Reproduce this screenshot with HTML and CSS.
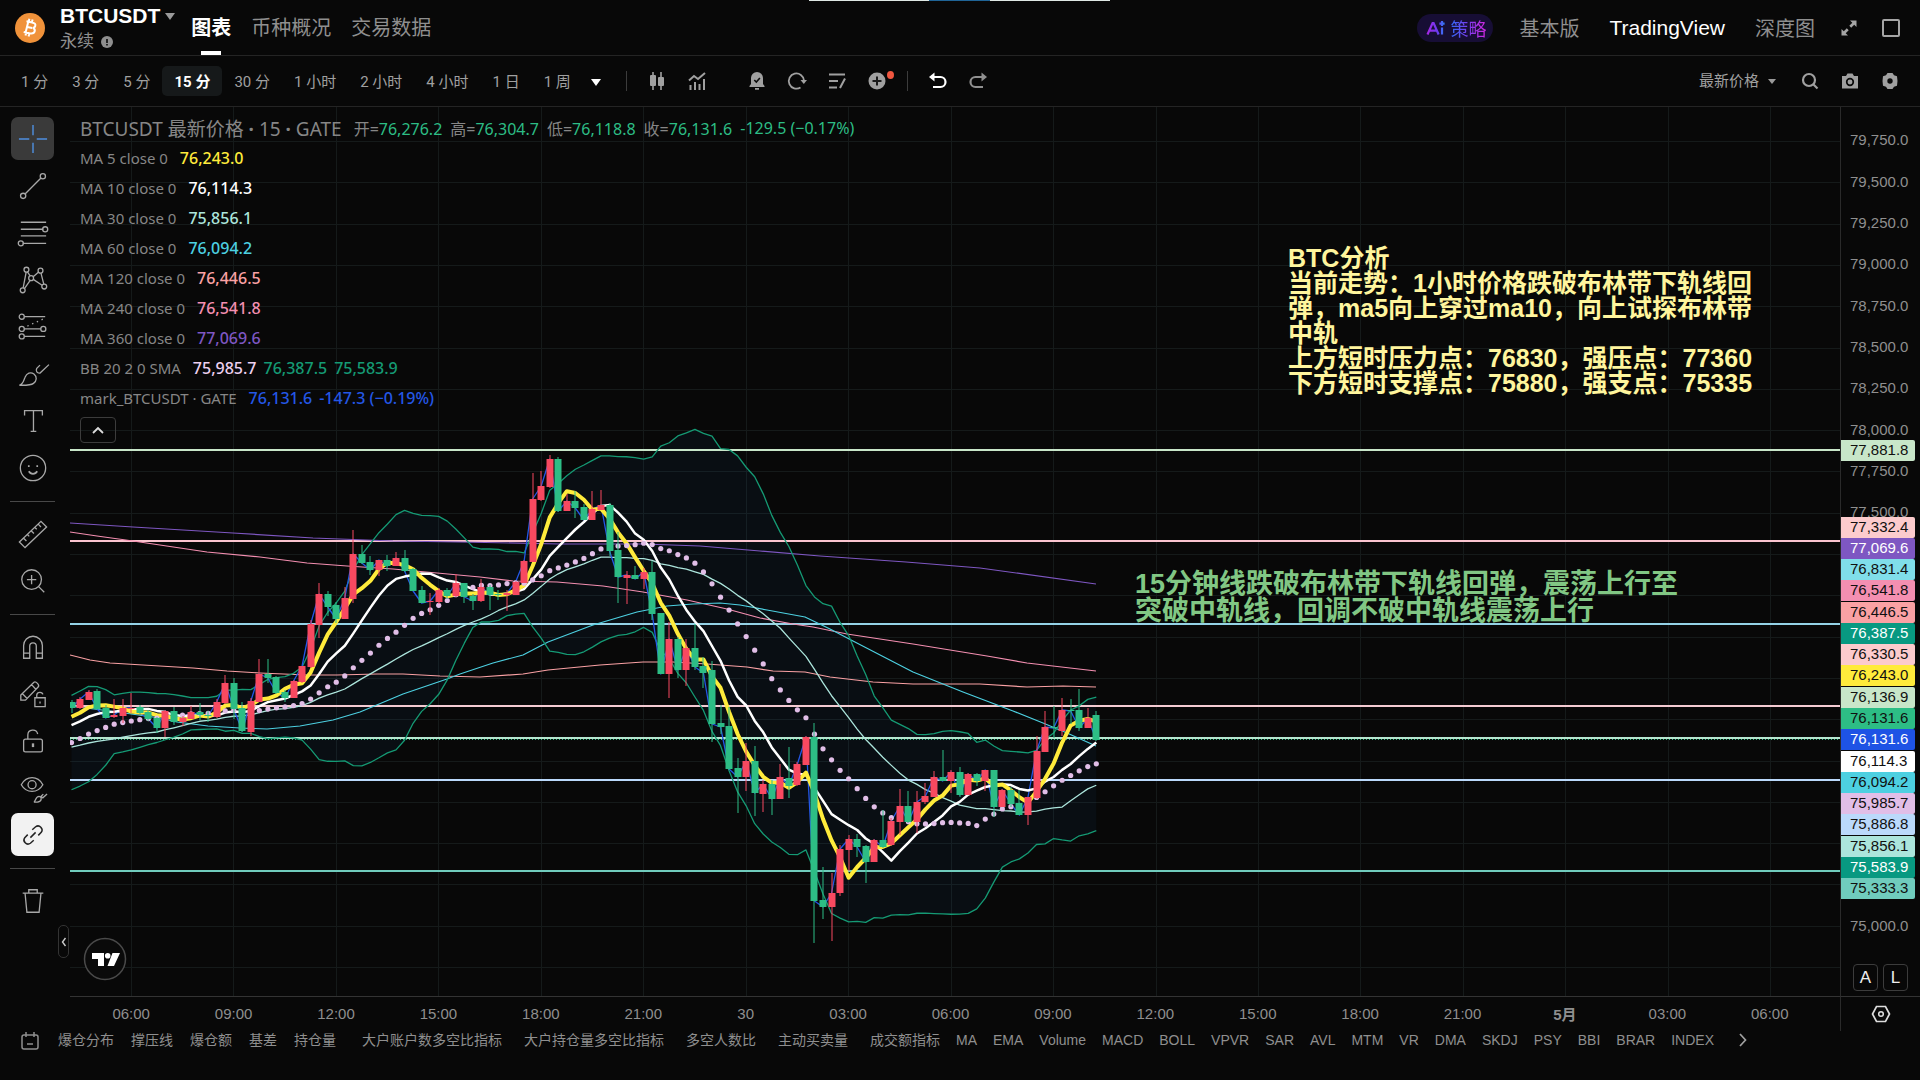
FILE: index.html
```html
<!DOCTYPE html>
<html lang="zh-CN">
<head>
    <meta charset="UTF-8">
    <meta name="viewport" content="width=device-width, initial-scale=1.0">
    <title>BTCUSDT 永续</title>
    <link rel="stylesheet" href="styles.css">
</head>
<body>
    <div class="top-strip"></div>

    <header class="header">
        <svg class="coin" viewBox="0 0 30 30">
            <circle cx="15" cy="15" r="15" fill="#f0923a"/>
            <path d="M11.5 8.2l5.6 1.2c2.6.6 3.6 1.7 3.2 3.4-.3 1.3-1.2 2-2.4 2 1.6.7 2.2 1.8 1.8 3.4-.5 2-2.2 2.6-5.2 2l-5.8-1.3M13.2 9l-2.6 10.4M12.2 13.9l5 1.1M14.4 5.8l-.7 2.7M17.6 6.5l-.7 2.7M11.2 19.8l-.7 2.8M14.3 20.6l-.7 2.8" fill="none" stroke="#fff" stroke-width="2"/>
        </svg>
        <div class="symbol">
            <button class="symbol-name">BTCUSDT<i class="caret"></i></button>
            <div class="symbol-type">永续
                <svg width="12" height="12" viewBox="0 0 12 12"><circle cx="6" cy="6" r="6" fill="#8f8f8f"/><path d="M6 3v4M6 8v1.4" stroke="#0a0a0a" stroke-width="1.6"/></svg>
            </div>
        </div>
        <nav class="tabs">
            <a href="#" class="active">图表</a>
            <a href="#">币种概况</a>
            <a href="#">交易数据</a>
        </nav>
        <nav class="views">
            <a href="#" class="ai">
                <svg width="20" height="16" viewBox="0 0 20 16">
                    <defs><linearGradient id="ai-fill" x1="0" x2="1"><stop offset="0" stop-color="#a428e6"/><stop offset=".6" stop-color="#6a3cf0"/><stop offset="1" stop-color="#2f7cf6"/></linearGradient></defs>
                    <path d="M1.5 14.5L6.6 3h1l5 11.5M3.4 10.6h7.4M16 7.5v7M16 1v5M13.4 3.6h5.2" fill="none" stroke="url(#ai-fill)" stroke-width="2.2"/>
                </svg>
                <span>策略</span>
            </a>
            <a href="#">基本版</a>
            <a href="#" class="active">TradingView</a>
            <a href="#">深度图</a>
            <button class="expand" aria-label="展开"><svg width="18" height="18" viewBox="0 0 18 18"><path d="M10 1.5h6.5V8l-2.3-2.3-3 3-1.9-1.9 3-3zM8 16.5H1.5V10l2.3 2.3 3-3 1.9 1.9-3 3z" fill="#a5a5a5"/></svg></button>
            <button class="window" aria-label="窗口"><svg width="18" height="18" viewBox="0 0 18 18"><rect x="1" y="1" width="16" height="16" rx="1" fill="none" stroke="#a5a5a5" stroke-width="2"/></svg></button>
        </nav>
    </header>

    <div class="toolbar">
        <div class="intervals">
            <button>1 分</button>
            <button>3 分</button>
            <button>5 分</button>
            <button class="active">15 分</button>
            <button>30 分</button>
            <button>1 小时</button>
            <button>2 小时</button>
            <button>4 小时</button>
            <button>1 日</button>
            <button>1 周</button>
            <button class="more" aria-label="更多周期"><i class="caret white"></i></button>
        </div>
        <div class="actions">
            <button aria-label="K线样式"><svg viewBox="0 0 20 20"><path d="M6 1v18M14 1v18" stroke="#a0a0a0" stroke-width="1.6"/><rect x="3" y="4" width="6" height="11" rx="1" fill="#a0a0a0"/><rect x="11" y="6" width="6" height="9" rx="1" fill="#a0a0a0"/></svg></button>
            <button aria-label="指标"><svg viewBox="0 0 20 20"><path d="M2 9.5l5-4.5 4 3 7-6M3.5 19v-5M8 19v-8M12.500 19v-6M17 19V8" fill="none" stroke="#a0a0a0" stroke-width="2"/></svg></button>
            <button aria-label="提醒" class="wide"><svg viewBox="0 0 20 20"><path d="M10 1a6 6 0 0 1 6 6v6l1.500 2v1h-15v-1L4 13V7a6 6 0 0 1 6-6zM8 17h4v1.800H8z" fill="#a0a0a0"/><path d="M7.300 9l2 2 3.600-4" fill="none" stroke="#0a0a0a" stroke-width="1.600"/></svg></button>
            <button aria-label="回放"><svg viewBox="0 0 20 20"><path d="M13.500 16.500A7.600 7.600 0 1 1 17 9.500" fill="none" stroke="#a0a0a0" stroke-width="1.800"/><path d="M13.500 9H20l-3.200 4z" fill="#a0a0a0"/></svg></button>
            <button aria-label="列表"><svg viewBox="0 0 20 20"><path d="M2 3.500h16M2 10h9M2 16.500h8M18 7.500l-5 9.500" fill="none" stroke="#a0a0a0" stroke-width="2"/></svg></button>
            <button aria-label="添加" class="dot"><svg viewBox="0 0 20 20"><circle cx="10" cy="10" r="8.500" fill="#a0a0a0"/><path d="M10 5.500v9M5.500 10h9" stroke="#1a1a1a" stroke-width="2"/></svg></button>
        </div>
        <div class="history">
            <button aria-label="撤销"><svg viewBox="0 0 20 20"><path d="M4 6h8.500a5 5 0 0 1 0 10H5" fill="none" stroke="#fff" stroke-width="2.200"/><path d="M6.500 1.500v9L1 6z" fill="#fff"/></svg></button>
            <button aria-label="重做"><svg viewBox="0 0 20 20"><path d="M16 6H7.500a5 5 0 0 0 0 10H15" fill="none" stroke="#909090" stroke-width="2.200"/><path d="M13.500 1.500v9L19 6z" fill="#909090"/></svg></button>
        </div>
        <div class="right-tools">
            <label class="price-type">
                <select aria-label="价格类型"><option>最新价格</option></select>
                <i class="caret small"></i>
            </label>
            <button aria-label="搜索"><svg viewBox="0 0 20 20"><circle cx="9" cy="9" r="6" fill="none" stroke="#a0a0a0" stroke-width="2.200"/><path d="M13.500 13.500l4 4" stroke="#a0a0a0" stroke-width="2.200"/></svg></button>
            <button aria-label="截图"><svg viewBox="0 0 20 20"><path d="M2 5h4l1.500-2.500h5L14 5h4v12.500H2z" fill="#a0a0a0"/><circle cx="10" cy="11" r="3.300" fill="none" stroke="#0a0a0a" stroke-width="1.700"/></svg></button>
            <button aria-label="设置"><svg viewBox="0 0 20 20"><path d="M7.500 2h5l1.500 2.200 3 1L17.500 10 17 14.800l-3 1L12.500 18h-5L6 15.800l-3-1L2.500 10 3 5.200l3-1z" fill="#a0a0a0"/><circle cx="10" cy="10" r="2.700" fill="#0a0a0a"/></svg></button>
        </div>
    </div>

    <main class="workspace">
        <aside class="rail">
            <div class="tools">
                <button class="selected" aria-label="十字线"><svg viewBox="0 0 32 32"><path d="M16 1v11M16 20v11M1 16h11M20 16h11" stroke-width="1.500"/></svg></button>
                <button aria-label="趋势线"><svg viewBox="0 0 32 32"><circle cx="5.500" cy="26.500" r="2.800"/><circle cx="26.500" cy="5.500" r="2.800"/><path d="M7.500 24.500l17-17"/></svg></button>
                <button aria-label="斐波那契"><svg viewBox="0 0 32 32"><path d="M3 4.500h27M3 12h24M3 19h27M5 27h25"/><circle cx="29" cy="12" r="2.700"/><circle cx="3" cy="27" r="2.700"/></svg></button>
                <button aria-label="形态"><svg viewBox="0 0 32 32"><circle cx="9" cy="5" r="2.600"/><circle cx="24" cy="6" r="2.600"/><circle cx="14" cy="14" r="2.600"/><circle cx="5" cy="27" r="2.600"/><circle cx="28" cy="23" r="2.600"/><path d="M8.700 7.600L5.500 24.400M7 25l6-8.600M10 7.400l3 4.300M16.200 12.500l5.800-5M16.300 15.300l9.400 6.300M24.500 8.600l3 11.800"/></svg></button>
                <button aria-label="预测"><svg viewBox="0 0 32 32"><circle cx="4" cy="5" r="2.700"/><circle cx="4" cy="18" r="2.700"/><circle cx="27" cy="18" r="2.700"/><circle cx="4" cy="26" r="2.700"/><path d="M6.700 5H29M6.700 18h17.600M6.700 26H29"/><path d="M10 15L28 7" stroke-dasharray="1.500 4"/></svg></button>
                <button aria-label="画笔"><svg viewBox="0 0 32 32"><path d="M1.500 28c4-1 4-4 6-8.500 1.800-4.500 6-6 9.500-3.500 3.500 2.800 3.200 7.200-.5 10-3 2.300-8 2-15 2zM33 6l-9.500 9c-3 .5-5-2-3.500-5l3.500-3.500"/></svg></button>
                <button aria-label="文字"><svg viewBox="0 0 32 32"><path d="M7 10V5h19v5M16.500 5v22M13.500 27h6"/></svg></button>
                <button aria-label="表情"><svg viewBox="0 0 32 32"><circle cx="16" cy="16" r="13.500"/><path d="M11.500 19.500c2 3.600 7 3.600 9 0M11.500 13v2M20.500 13v2" stroke-width="1.800"/></svg></button>
            </div>
            <hr>
            <div class="tools">
                <button aria-label="测量"><svg viewBox="0 0 32 32"><path d="M1.500 24.500L24.500 2.500l6 6-23 22zM6 20.500l3 3M10 16.500l2 2M14 12.500l3 3M18 9l2 2M21.500 5.500l3 3"/></svg></button>
                <button aria-label="放大"><svg viewBox="0 0 32 32"><circle cx="14.500" cy="14.500" r="10.500"/><path d="M14.500 9.500v10M9.500 14.500h10M22 22l6 6"/></svg></button>
            </div>
            <hr>
            <div class="tools">
                <button aria-label="磁铁"><svg viewBox="0 0 32 32"><path d="M6 28V14.500a10 10 0 0 1 20 0V28h-6.500V15a3.500 3.500 0 0 0-7 0v13zM6 22.500h6.500M19.500 22.500H26"/></svg></button>
                <button aria-label="绘图模式"><svg viewBox="0 0 32 32"><path d="M3 22.500L3 17 17 3.500c2-1.500 6.500 3 4.500 5L8 22.500zM14.500 6l4.500 5M5 16l5 5M18 20h11v9.500H18zM20 20v-3c.5-3.500 6-3.500 6.500-.5M23.500 24v2"/></svg></button>
                <button aria-label="锁定"><svg viewBox="0 0 32 32"><rect x="6" y="14" width="20" height="13.500" rx="2"/><path d="M10.500 14V9.500c0-6 9-7 10.500-1"/><path d="M16 18.500v4" stroke-width="2.500"/></svg></button>
                <button aria-label="隐藏"><svg viewBox="0 0 32 32"><path d="M3.500 12.500C9 2.500 21 2.500 26.500 12.500 21 22 9 22 3.500 12.500z"/><circle cx="15" cy="12.500" r="4.300"/><path d="M17 31c2-.8 1.500-6 5.500-6 3.500.5 3 6-2 6zM31 22.500l-4.500 4-2-1.500 2.500-2.500"/></svg></button>
                <button class="link" aria-label="同步"><svg viewBox="0 0 32 32"><path d="M15 9l4.500-4c5-3.500 11 2.500 7.500 7.500l-4 4M17 23l-4.500 4C7.500 30.500 1.500 24.500 5 19.500l4-4M12.500 19.500l7-7"/></svg></button>
            </div>
            <hr>
            <div class="tools">
                <button aria-label="删除"><svg viewBox="0 0 32 32"><path d="M5 7.500h22M11.500 7.500v-3.500h9v3.500M7.500 7.500l2 20.500h13l2-20.500"/></svg></button>
            </div>
            <button class="fold" aria-label="收起"><svg width="6" height="10" viewBox="0 0 6 10"><path d="M4.500 1L1.500 5l3 4" fill="none" stroke="#ccc" stroke-width="1.400"/></svg></button>
        </aside>

        <section class="chart">
            <div class="plot">
                <svg id="canvas" class="canvas" viewBox="70 107 1770 889" preserveAspectRatio="none"></svg>

                <div class="legend">
                    <div class="legend-main">
                        <h1>BTCUSDT 最新价格 <b>·</b> 15 <b>·</b> GATE</h1>
                        <span>开=<em>76,276.2</em></span>
                        <span>高=<em>76,304.7</em></span>
                        <span>低=<em>76,118.8</em></span>
                        <span>收=<em>76,131.6</em></span>
                        <em>-129.5 (−0.17%)</em>
                    </div>
                    <div class="legend-row">MA 5 close 0 <b class="c-yellow">76,243.0</b></div>
                    <div class="legend-row">MA 10 close 0 <b class="c-white">76,114.3</b></div>
                    <div class="legend-row">MA 30 close 0 <b class="c-mint">75,856.1</b></div>
                    <div class="legend-row">MA 60 close 0 <b class="c-cyan">76,094.2</b></div>
                    <div class="legend-row">MA 120 close 0 <b class="c-salmon">76,446.5</b></div>
                    <div class="legend-row">MA 240 close 0 <b class="c-pink">76,541.8</b></div>
                    <div class="legend-row">MA 360 close 0 <b class="c-purple">77,069.6</b></div>
                    <div class="legend-row">BB 20 2 0 SMA <b class="c-lilac">75,985.7</b><b class="c-teal">76,387.5</b><b class="c-teal">75,583.9</b></div>
                    <div class="legend-row">mark_BTCUSDT · GATE <b class="c-blue">76,131.6</b><b class="c-blue">-147.3 (−0.19%)</b></div>
                    <button class="toggle" aria-label="收起图例"><svg width="12" height="8" viewBox="0 0 12 8"><path d="M1 7l5-5 5 5" fill="none" stroke="#ddd" stroke-width="1.800"/></svg></button>
                </div>

                <p class="note note-yellow">BTC分析<br>当前走势：1小时价格跌破布林带下轨线回<br>弹，ma5向上穿过ma10，向上试探布林带<br>中轨<br>上方短时压力点：76830，强压点：77360<br>下方短时支撑点：75880，强支点：75335</p>
                <p class="note note-green">15分钟线跌破布林带下轨线回弹，震荡上行至<br>突破中轨线，回调不破中轨线震荡上行</p>

                <svg class="tv-logo" viewBox="0 0 44 44">
                    <circle cx="22" cy="22" r="20.500" fill="#0a0a0a" stroke="#4a4a4a" stroke-width="1.500"/>
                    <path d="M9 16h12v13h-6v-7H9zM29.500 16H37l-6 13h-6.500z" fill="#fff"/>
                    <circle cx="24.700" cy="18.800" r="2.800" fill="#fff"/>
                </svg>
            </div>

            <div class="price-axis">
                <div class="ticks">
                    <span>79,750.0</span><span>79,500.0</span><span>79,250.0</span><span>79,000.0</span><span>78,750.0</span>
                    <span>78,500.0</span><span>78,250.0</span><span>78,000.0</span><span>77,750.0</span><span>77,500.0</span>
                    <span></span><span></span><span></span><span></span><span></span>
                    <span></span><span></span><span></span><span></span><span>75,000.0</span>
                </div>
                <div class="scale-buttons"><button>A</button><button>L</button></div>
                <div class="tags tags-top"><span class="bg-green">77,881.8</span></div>
                <div class="tags tags-stack">
                    <span class="bg-rose">77,332.4</span>
                    <span class="bg-purple">77,069.6</span>
                    <span class="bg-aqua">76,831.4</span>
                    <span class="bg-pink gap">76,541.8</span>
                    <span class="bg-salmon">76,446.5</span>
                    <span class="bg-teal">76,387.5</span>
                    <span class="bg-rose">76,330.5</span>
                    <span class="bg-yellow gap">76,243.0</span>
                    <span class="bg-green">76,136.9</span>
                    <span class="bg-up">76,131.6</span>
                    <span class="bg-blue gap">76,131.6</span>
                    <span class="bg-white">76,114.3</span>
                    <span class="bg-cyan">76,094.2</span>
                    <span class="bg-lilac">75,985.7</span>
                    <span class="bg-sky gap">75,886.8</span>
                    <span class="bg-mint">75,856.1</span>
                    <span class="bg-teal">75,583.9</span>
                    <span class="bg-sea">75,333.3</span>
                </div>
            </div>

            <div class="time-axis">
                <span>06:00</span><span>09:00</span><span>12:00</span><span>15:00</span><span>18:00</span><span>21:00</span>
                <span>30</span><span>03:00</span><span>06:00</span><span>09:00</span><span>12:00</span><span>15:00</span>
                <span>18:00</span><span>21:00</span><span><b>5月</b></span><span>03:00</span><span>06:00</span>
            </div>
            <button class="axis-settings" aria-label="坐标设置"><svg width="20" height="18" viewBox="0 0 20 18"><path d="M5.500 1.500h9L18.500 9l-4 7.500h-9L1.500 9z" fill="none" stroke="#ddd" stroke-width="1.700"/><circle cx="10" cy="9" r="2.300" fill="none" stroke="#ddd" stroke-width="1.500"/></svg></button>
        </section>
    </main>

    <footer class="indicators">
        <svg class="calendar" width="18" height="18" viewBox="0 0 18 18"><rect x="1" y="3" width="16" height="14" rx="2" fill="none" stroke="#8f8f8f" stroke-width="1.500"/><path d="M5 0v5M13 0v5M6 12h6" stroke="#8f8f8f" stroke-width="1.500"/></svg>
        <div class="group">
            <button>爆仓分布</button><button>撑压线</button><button>爆仓额</button><button>基差</button><button>持仓量</button>
        </div>
        <div class="group group-long">
            <button>大户账户数多空比指标</button><button>大户持仓量多空比指标</button><button>多空人数比</button><button>主动买卖量</button><button>成交额指标</button>
        </div>
        <div class="group group-latin">
            <button>MA</button><button>EMA</button><button>Volume</button><button>MACD</button><button>BOLL</button><button>VPVR</button><button>SAR</button><button>AVL</button><button>MTM</button><button>VR</button><button>DMA</button><button>SKDJ</button><button>PSY</button><button>BBI</button><button>BRAR</button><button>INDEX</button>
            <button class="next" aria-label="更多"><svg width="10" height="14" viewBox="0 0 10 14"><path d="M2 1l5.500 6L2 13" fill="none" stroke="#a0a0a0" stroke-width="1.700"/></svg></button>
        </div>
    </footer>

    <script src="chart.js"></script>
</body>
</html>
```
FILE: styles.css
```css
* {
    margin: 0;
    padding: 0;
    box-sizing: border-box;
}
body {
    display: flex;
    flex-direction: column;
    min-height: 100vh;
    background-color: #080808;
    color: #8f8f8f;
    font-family: "Liberation Sans", "Noto Sans CJK SC", sans-serif;
    font-size: 15px;
    overflow-x: hidden;
}
button, select {
    background: none;
    border: none;
    color: inherit;
    font: inherit;
    cursor: pointer;
    white-space: nowrap;
}
a {
    color: inherit;
    text-decoration: none;
}
svg {
    display: block;
}
em {
    font-style: normal;
}
.top-strip {
    position: absolute;
    top: 0;
    left: 809px;
    width: 301px;
    height: 1px;
    background: linear-gradient(to right, #dfe8e4 40%, #1f6496 40%, #1f6496 60%, #dfe8e4 60%);
}
.caret {
    display: inline-block;
    border: 5px solid transparent;
    border-top: 7px solid #9a9a9a;
    border-bottom: none;
}
.caret.white {
    border-top-color: #fff;
}
.caret.small {
    border-width: 5px 4px 0;
}

/* header */
.header {
    display: flex;
    align-items: center;
    height: 56px;
    padding: 0 20px 0 15px;
    border-bottom: 1px solid #242424;
}
.coin {
    width: 30px;
    height: 30px;
}
.symbol {
    margin-left: 15px;
    padding-top: 3px;
}
.symbol-name {
    display: flex;
    align-items: center;
    gap: 5px;
    color: #fff;
    font-size: 21px;
    font-weight: bold;
    line-height: 26px;
}
.symbol-type {
    display: flex;
    align-items: center;
    gap: 7px;
    font-size: 17px;
    line-height: 26px;
}
.tabs {
    display: flex;
    gap: 20px;
    margin-left: 16px;
    font-size: 20px;
    line-height: 55px;
}
.tabs a {
    padding-top: 2px;
}
.tabs .active {
    position: relative;
    color: #fff;
    font-weight: bold;
}
.tabs .active::after {
    content: "";
    position: absolute;
    left: 50%;
    bottom: 1px;
    width: 20px;
    height: 4px;
    margin-left: -10px;
    background-color: #fff;
}
.views {
    display: flex;
    align-items: center;
    gap: 30px;
    margin-left: auto;
    font-size: 20px;
}
.views .active {
    color: #fff;
    font-size: 21px;
}
.views .expand {
    margin-left: -5px;
}
.views .window {
    margin-left: -6px;
}
.views .ai {
    display: flex;
    align-items: center;
    gap: 4px;
    height: 28px;
    padding: 0 7px 0 9px;
    margin-right: -4px;
    border-radius: 14px;
    background-color: #170e35;
    font-size: 18px;
}
.ai span {
    background: linear-gradient(to right, #2f6cf6, #7a3cf0 50%, #d428e0);
    background-clip: text;
    color: transparent;
}

/* toolbar */
.toolbar {
    display: flex;
    align-items: center;
    height: 51px;
    padding: 0 20px 0 9px;
    border-bottom: 1px solid #242424;
    font-family: Roboto, "Noto Sans CJK SC", sans-serif;
    color: #a0a0a0;
}
.intervals {
    display: flex;
}
.intervals button {
    height: 30px;
    padding: 0 12px 2px;
    border-radius: 5px;
}
.intervals .active {
    background-color: #16191a;
    color: #fff;
    font-weight: bold;
}
.intervals .more {
    padding: 0 4px;
    margin: 0 21px 0 4px;
}
.actions, .history {
    display: flex;
    gap: 20px;
    padding-left: 21px;
    position: relative;
}
.actions::before, .history::before {
    content: "";
    position: absolute;
    left: 0;
    width: 1px;
    height: 20px;
    background-color: #3c3c3c;
}
.history {
    margin-left: 20px;
}
.actions svg, .history svg, .right-tools svg {
    width: 20px;
    height: 20px;
}
.actions .wide {
    margin-left: 20px;
}
.actions .dot {
    position: relative;
}
.actions .dot::after {
    content: "";
    position: absolute;
    top: 0;
    right: -7px;
    width: 7px;
    height: 8px;
    border-radius: 50%;
    background-color: #f0563f;
}
.right-tools {
    display: flex;
    align-items: center;
    gap: 20px;
    margin-left: auto;
}
.price-type {
    display: flex;
    align-items: center;
    gap: 8px;
    margin-right: 4px;
}
.price-type select {
    appearance: none;
}

/* drawing tools */
.workspace {
    display: flex;
    flex: 1;
}
.rail {
    position: relative;
    width: 70px;
    padding: 8px 15px 0 10px;
}
.tools {
    display: flex;
    flex-direction: column;
    align-items: center;
}
.tools button {
    display: flex;
    align-items: center;
    justify-content: center;
    width: 43px;
    height: 43px;
    margin: 2px 0;
    border-radius: 7px;
}
.tools svg {
    width: 30px;
    height: 30px;
    fill: none;
    stroke: #a8a8a8;
    stroke-width: 1.4;
    overflow: visible;
}
.tools .selected {
    background-color: #3a3a3a;
}
.tools .selected svg {
    stroke: #4f8fe0;
}
.tools .link {
    background-color: #f2f2f2;
}
.tools .link svg {
    width: 24px;
    height: 24px;
    stroke: #222;
    stroke-width: 2;
}
.rail hr {
    height: 1px;
    margin: 10px 0 8px;
    border: none;
    background-color: #484848;
}
.fold {
    position: absolute;
    right: 1px;
    top: 818px;
    display: flex;
    align-items: center;
    justify-content: center;
    width: 11px;
    height: 33px;
    border: 1px solid #333;
    border-radius: 5px;
}

/* chart */
.chart {
    flex: 1;
    display: grid;
    grid-template-columns: 1fr 80px;
    grid-template-rows: 1fr 35px;
}
.plot {
    position: relative;
    overflow: hidden;
}
.canvas {
    position: absolute;
    width: 100%;
    height: 100%;
}
.legend {
    position: relative;
    padding: 6px 0 0 10px;
    font-family: "Noto Sans", "Noto Sans CJK SC", sans-serif;
    color: #868686;
}
.legend-main {
    display: flex;
    align-items: center;
    gap: 8px;
    height: 30px;
    font-size: 16px;
}
.legend-main h1 {
    margin-right: 4px;
    font-size: 19px;
    font-weight: normal;
}
.legend-main em {
    color: #2dbd85;
}
.legend-row {
    display: flex;
    align-items: center;
    height: 30px;
}
.legend-row b {
    margin-left: 12px;
    font-size: 16px;
    font-weight: 500;
}
.legend-row b + b {
    margin-left: 7px;
}
.toggle {
    display: flex;
    align-items: center;
    justify-content: center;
    width: 36px;
    height: 26px;
    margin-top: 4px;
    border: 1px solid #3c3c3c;
    border-radius: 4px;
}
.c-yellow { color: #ffeb3b; }
.c-white { color: #fff; }
.c-mint { color: #ace5dc; }
.c-cyan { color: #4dd0e1; }
.c-salmon { color: #faa1a4; }
.c-pink { color: #f48fb1; }
.c-purple { color: #7e57c2; }
.c-lilac { color: #ecd0f0; }
.c-teal { color: #159a74; }
.c-blue { color: #2457e6; }
.note {
    position: absolute;
    font-weight: bold;
    white-space: nowrap;
}
.note-yellow {
    left: 1218px;
    top: 139px;
    color: #fff59d;
    font-size: 25px;
    line-height: 25px;
}
.note-green {
    left: 1065px;
    top: 464px;
    color: #81c784;
    font-size: 27px;
    line-height: 27px;
}
.tv-logo {
    position: absolute;
    left: 13px;
    bottom: 15px;
    width: 44px;
    height: 44px;
}

/* axes */
.price-axis {
    position: relative;
    display: flex;
    flex-direction: column;
    padding-top: 12px;
    border-left: 1px solid #2a2a2a;
}
.ticks {
    flex: 1;
    display: grid;
    grid-template-rows: repeat(20, 1fr);
    align-items: center;
    padding-left: 9px;
}
.scale-buttons {
    display: flex;
    gap: 5px;
    height: 50px;
    padding: 18px 0 5px 12px;
}
.scale-buttons button {
    width: 25px;
    border: 1px solid #3c3c3c;
    border-radius: 4px;
    color: #eee;
    font-size: 17px;
}
.tags {
    position: absolute;
    left: 0;
    width: 74px;
}
.tags-top {
    top: 333px;
}
.tags-stack {
    top: 410px;
}
.tags span {
    display: block;
    height: 21px;
    padding-left: 9px;
    border-radius: 0 2px 2px 0;
    line-height: 20px;
    color: #101010;
}
.tags .gap {
    margin-bottom: 1px;
}
.tags .bg-purple { background-color: #7e57c2; color: #fff; }
.tags .bg-teal { background-color: #089981; color: #fff; }
.tags .bg-blue { background-color: #1e53e5; color: #fff; }
.bg-green { background-color: #c8e6c9; }
.bg-rose { background-color: #fccbcd; }
.bg-aqua { background-color: #80deea; }
.bg-pink { background-color: #f48fb1; }
.bg-salmon { background-color: #faa1a4; }
.bg-yellow { background-color: #ffeb3b; }
.bg-up { background-color: #2dbd85; }
.bg-white { background-color: #fff; }
.bg-cyan { background-color: #4dd0e1; }
.bg-lilac { background-color: #e1bee7; }
.bg-sky { background-color: #bbd9fb; }
.bg-mint { background-color: #ace5dc; }
.bg-sea { background-color: #70ccbd; }
.time-axis {
    display: grid;
    grid-template-columns: repeat(17, 1fr);
    align-items: center;
    padding: 0 19px 2px 10px;
    border-top: 1px solid #333;
    text-align: center;
}
.axis-settings {
    display: flex;
    align-items: center;
    justify-content: center;
    border-top: 1px solid #333;
    border-left: 1px solid #2a2a2a;
}

/* indicator list */
.indicators {
    display: flex;
    align-items: flex-start;
    height: 49px;
    padding-left: 21px;
    font-size: 14px;
    line-height: 18px;
}
.calendar {
    margin: 1px 19px 0 0;
}
.group {
    display: flex;
    align-items: center;
    gap: 17px;
    margin-right: 26px;
}
.group-long {
    gap: 22px;
    margin-right: 16px;
}
.group-latin {
    gap: 16px;
    margin-right: 0;
}
.group-latin .next {
    margin-left: 8px;
}
```
FILE: chart.js
```js
const canvas = document.getElementById('canvas');
const NS = 'http://www.w3.org/2000/svg';

const STEP = 8.54;
const FIRST_X = 71.5;
const GREEN = '#2dbd85';
const RED = '#f84960';

// u = up, d = down; then high, body top, body bottom, low
const candles = `d 700 702 708 713|u 697 699 708 709|u 690 692 700 700|d 689 691 709 710|d 705 708 718 718
u 699 715 717 718|u 699 708 716 723|u 693 708 709 713|d 705 707 713 714|d 710 712 719 721
d 717 718 728 733|u 710 711 728 737|d 707 711 722 725|u 716 718 722 726|u 706 712 719 719
d 703 712 715 720|d 711 715 716 722|u 699 702 717 718|u 675 683 703 704|d 678 683 709 719
d 702 708 731 732|u 698 701 732 736|u 659 674 702 702|d 659 674 678 683|d 676 677 693 694
d 690 692 698 702|u 680 681 698 698|u 666 666 682 683|u 620 624 667 668|u 583 594 625 638
d 591 594 607 616|d 602 605 619 623|u 587 598 619 619|u 530 554 599 603|d 545 554 563 564
d 556 562 570 575|u 560 560 570 576|d 555 560 566 571|u 552 558 566 566|d 550 558 571 572
d 568 569 591 591|d 586 590 603 603|u 593 601 602 615|u 588 590 602 604|d 588 590 596 599
u 574 583 596 597|d 583 583 597 603|d 594 596 601 610|u 579 587 601 602|d 585 587 595 610
d 590 594 595 600|u 590 593 595 611|u 581 582 595 595|u 560 561 583 583|u 473 499 562 562
u 471 486 500 501|u 455 459 487 488|d 457 459 511 512|u 494 501 511 511|d 491 501 508 518
d 504 507 520 520|u 491 509 520 520|u 490 505 510 510|d 503 505 551 556|d 532 550 577 603
u 571 575 578 604|d 566 575 579 579|u 568 572 579 589|d 561 572 614 620|d 613 613 674 674
u 622 639 674 698|d 637 639 670 678|u 639 648 670 686|d 624 648 667 670|d 657 666 673 688
d 661 670 724 742|d 705 723 727 734|d 707 726 769 770|d 758 768 777 813|u 743 761 777 791
d 746 761 793 816|u 780 784 794 812|d 780 784 799 815|u 764 777 799 799|d 747 778 786 798
u 762 764 785 786|u 736 737 765 765|d 723 737 901 943|d 867 900 907 919|u 873 893 907 941
u 845 849 893 896|u 835 839 850 871|d 834 839 847 857|d 845 846 862 883|u 839 840 862 862
d 810 840 847 848|u 818 821 845 846|u 789 806 822 835|d 791 806 822 823|u 791 802 822 833
u 783 796 802 804|u 771 777 797 797|d 750 777 781 781|u 770 772 781 793|d 767 772 795 797
u 773 774 795 795|d 773 774 781 786|u 770 770 781 791|d 770 770 807 817|u 789 790 807 807
d 787 790 804 807|d 790 803 815 815|u 797 797 815 825|u 736 751 798 799|u 711 727 752 752
d 706 727 728 738|u 698 710 731 736|d 699 710 711 724|d 689 710 728 731|u 708 718 728 728
d 711 715 740 741`.split(/[|\n]/).map((row, i) => {
    const [dir, high, top, bottom, low] = row.split(' ');
    return { up: dir === 'u', x: FIRST_X + i * STEP, high: +high, top: +top, bottom: +bottom, low: +low };
});

// closes before the first visible bar, needed by the averages
const history = [
    ...Array(10).fill(756), ...Array(5).fill(780), ...Array(5).fill(740),
    ...Array(4).fill(737), ...Array(5).fill(719)
];
const closes = history.concat(candles.map(c => c.up ? c.top : c.bottom));

function windowAt(i, n) {
    const end = history.length + i + 1;
    return closes.slice(end - n, end);
}
function mean(list) {
    return list.reduce((a, b) => a + b, 0) / list.length;
}
function average(n) {
    return candles.map((c, i) => [c.x, mean(windowAt(i, n))]);
}
function band(side) {
    return candles.map((c, i) => {
        const w = windowAt(i, 20);
        const m = mean(w);
        const dev = Math.sqrt(mean(w.map(v => (v - m) ** 2)));
        return [c.x, m + side * 2 * dev];
    });
}
function priceY(price) {
    return 141.3 + (79750 - price) * 0.16526;
}
function add(tag, attrs) {
    const el = document.createElementNS(NS, tag);
    for (const key in attrs) el.setAttribute(key, attrs[key]);
    canvas.appendChild(el);
}
function line(points, stroke, width) {
    add('polyline', { points: points.map(p => p.join(',')).join(' '), fill: 'none', stroke, 'stroke-width': width, 'stroke-linejoin': 'round' });
}
function parse(text) {
    return text.split(' ').map(p => p.split(',').map(Number));
}

// grid
for (let i = 0; i < 17; i++) {
    const x = Math.round(131 + i * 102.45);
    add('rect', { x, y: 107, width: 1, height: 889, fill: '#151a1a' });
}
for (let i = 0; i < 21; i++) {
    const y = Math.round(141 + i * 41.3);
    add('rect', { x: 70, y, width: 1770, height: 1, fill: '#151a1a' });
}

// bollinger area
const upper = band(-1);
const lower = band(1);
add('polygon', { points: upper.concat([...lower].reverse()).join(' '), fill: '#2180f3', 'fill-opacity': 0.05 });

// price levels
[[77881.8, '#c8e6c9'], [77332.4, '#fbc4cf'], [76831.4, '#94d2e6'], [76330.5, '#f3cbd2'],
 [76136.9, '#b5e6cf'], [75886.8, '#bbd9fb'], [75333.3, '#70ccbd']].forEach(([price, fill]) => {
    add('rect', { x: 70, y: Math.round(priceY(price)) - 1, width: 1770, height: 2, fill });
});
add('line', { x1: 70, x2: 1840, y1: 739.5, y2: 739.5, stroke: GREEN, 'stroke-dasharray': '1 2' });

// slow averages
line(parse('70,523 133,527 233,533 313,538 393,541 460,542 560,544 643,544 700,546 760,551 820,556 906,562 980,568 1096,584'), '#7e57c2', 1.2);
line(parse('70,532 97,536 133,541 207,552 260,557 307,563 347,566 393,569 437,573 480,577 513,581 557,582 603,586 643,592 687,600 727,609 760,618 793,624 813,627 847,634 913,644 987,656 1027,663 1096,671'), '#f48fb1', 1.2);
line(parse('70,655 90,660 110,663 143,665 193,668 227,671 260,673 307,675 337,675 377,674 403,674 440,676 480,677 523,674 548,670 600,665 643,662 673,662 707,664 747,667 773,671 805,672 830,677 873,682 913,684 980,684 1027,687 1063,686 1096,687'), '#faa1a4', 1.2);
line(parse('70,706 110,711 160,718 177,722 208,726 240,728 267,729 300,726 333,720 360,712 403,694 447,679 460,674 493,663 523,655 548,642 593,625 637,612 667,606 693,604 720,603 740,605 767,610 805,617 830,629 853,641 913,672 963,692 1013,711 1043,723 1067,733 1096,746'), '#4dd0e1', 1.2);

line(average(30), '#ace5dc', 1.3);
line(upper, '#159a74', 1.3);
line(lower, '#159a74', 1.3);
line(average(1), '#2457e6', 1.3);
line(average(10), '#fff', 2.5);
line(average(5), '#ffeb3b', 4);
average(20).forEach(([cx, cy]) => add('circle', { cx, cy, r: 2.6, fill: '#e1bee7' }));

candles.forEach(c => {
    const fill = c.up ? RED : GREEN;
    const x = Math.round(c.x);
    add('rect', { x: x - 0.5, y: c.high, width: 1, height: c.low - c.high, fill });
    add('rect', { x: x - 3.5, y: c.top, width: 7, height: Math.max(c.bottom - c.top, 1), fill });
});
```
